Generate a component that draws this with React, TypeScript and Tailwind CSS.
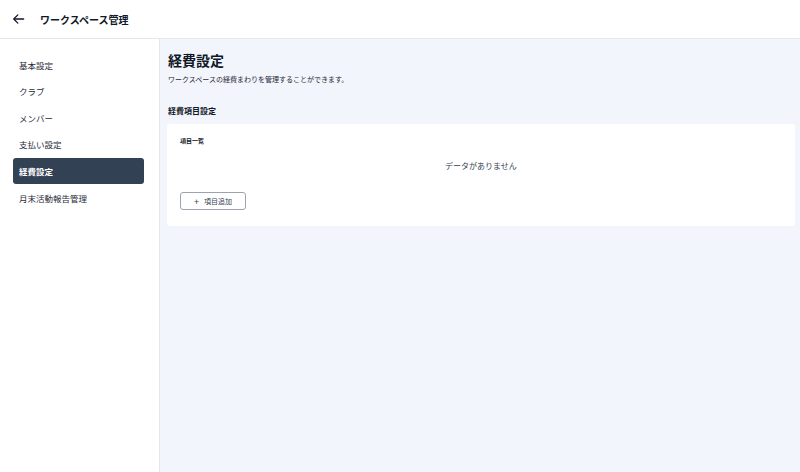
import React from 'react';

const font = { fontFamily: '"Noto Sans CJK JP", "Noto Sans", sans-serif' };

const menu = ['基本設定', 'クラブ', 'メンバー', '支払い設定', '経費設定', '月末活動報告管理'];

export default function App() {
  return (
    <div className="flex h-[472px] w-[800px] flex-col bg-white text-[#1f2937]" style={font}>
      {/* Header */}
      <header className="flex h-[39px] shrink-0 items-center border-b border-[#e5e7eb] bg-white pl-[12px]">
        <svg width="14" height="14" viewBox="0 0 24 24" fill="none" stroke="#111827" strokeWidth="2.2" strokeLinecap="round" strokeLinejoin="round">
          <path d="M20 12H4" />
          <path d="M10 5l-7 7 7 7" />
        </svg>
        <h1 className="ml-[14px] text-[10px] font-bold text-[#111827]">ワークスペース管理</h1>
      </header>

      <div className="flex min-h-0 flex-1">
        {/* Sidebar */}
        <aside className="w-[160px] shrink-0 border-r border-[#e5e7eb] bg-white pl-[13px] pr-[15px] pt-[13px]">
          <ul className="flex flex-col gap-[0.6px]">
            {menu.map((m) => (
              <li
                key={m}
                className={
                  m === '経費設定'
                    ? 'flex h-[26px] items-center rounded-[3px] bg-[#334155] px-[6px] text-[8.5px] font-bold text-white'
                    : 'flex h-[26px] items-center px-[6px] text-[8.5px] text-[#1f2937]'
                }
              >
                {m}
              </li>
            ))}
          </ul>
        </aside>

        {/* Main */}
        <main className="flex-1 bg-[#f2f5fc] pl-[7px] pr-[5px] pt-[12px]">
          <h2 className="pl-[1px] text-[14px] font-bold leading-[18px] text-[#111827]">経費設定</h2>
          <p className="mt-[5px] pl-[1px] text-[7px] leading-[10px] text-[#1f2937]">ワークスペースの経費まわりを管理することができます。</p>
          <h3 className="mt-[22px] pl-[1px] text-[8px] font-bold leading-[10px] text-[#111827]">経費項目設定</h3>

          <section className="mt-[8px] h-[102px] rounded-[3px] bg-white px-[13px] pt-[13px]">
            <p className="text-[6px] font-bold leading-[8px] text-[#111827]">項目一覧</p>
            <p className="mt-[16px] text-center text-[8px] leading-[10px] text-[#374151]">データがありません</p>
            <button className="mt-[21px] flex h-[18px] w-[66px] items-center justify-center gap-[5px] rounded-[3px] border border-[#9ca3af] bg-white text-[7px] text-[#374151]">
              <span className="text-[9px] leading-none">+</span>
              <span>項目追加</span>
            </button>
          </section>
        </main>
      </div>
    </div>
  );
}
